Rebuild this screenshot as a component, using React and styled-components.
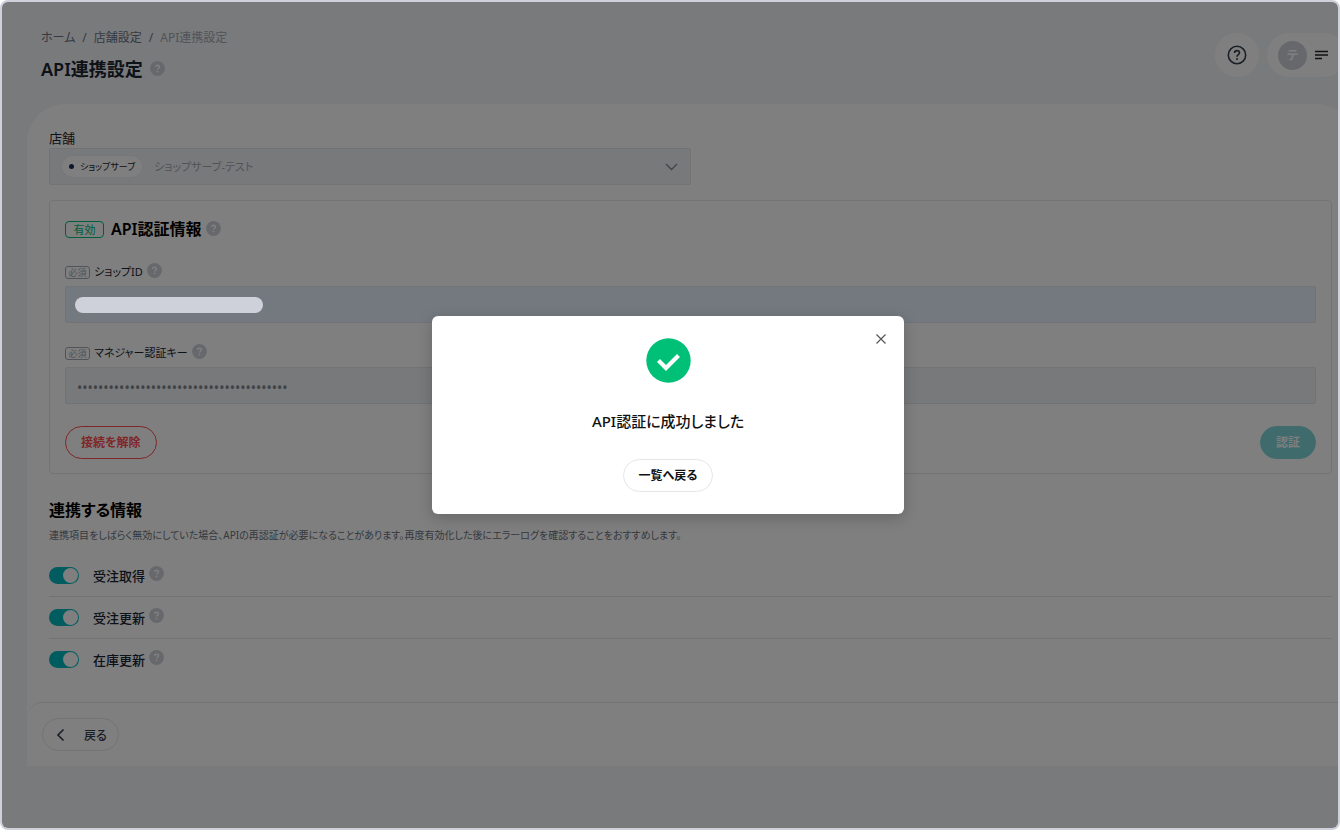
import React, { useState } from 'react';
import styled, { createGlobalStyle } from 'styled-components';

const GlobalStyle = createGlobalStyle`
    *, *::before, *::after {
        box-sizing: border-box;
    }

    body {
        margin: 0;
        background-color: #ffffff;
        color: #1a2433;
        font-family: 'Noto Sans', 'Noto Sans CJK JP', sans-serif;
        font-size: 13px;
        font-feature-settings: 'palt';
    }

    button, input, select {
        font: inherit;
        font-feature-settings: inherit;
        color: inherit;
    }

    h1, h2, p, ol, ul {
        margin: 0;
        padding: 0;
    }
`

const Frame = styled.div`
    position: relative;
    min-height: calc(100vh - 4px);
    border: 2px solid #ced1d9;
    border-radius: 8px;
    overflow: hidden;
    background-color: #f3f5f8;
`

/* the page runs a little past the right edge of the frame */
const Page = styled.div`
    width: calc(100% + 16px);
    padding-left: 25px;
`

const Header = styled.header`
    display: flex;
    justify-content: space-between;
    height: 102px;
    padding: 26px 8px 0 14px;
`

const Breadcrumb = styled.ol`
    display: flex;
    gap: 7px;
    list-style: none;
    font-size: 12px;
    line-height: 20px;
    color: #6b7280;
`

const Crumb = styled.a`
    color: ${props => props.$current ? '#a3a7b0' : '#6b7280'};
    text-decoration: none;
`

const PageTitle = styled.h1`
    display: flex;
    align-items: center;
    gap: 7px;
    margin-top: 7px;
    font-size: 18px;
    font-weight: 600;
    line-height: 28px;
`

const Actions = styled.div`
    display: flex;
    gap: 8px;
    padding-top: 5px;
`

const RoundButton = styled.button`
    display: flex;
    align-items: center;
    gap: 8px;
    height: 44px;
    min-width: 44px;
    padding: 0 ${props => props.$wide ? '18px 0 11px' : '12px'};
    border: none;
    border-radius: 22px;
    background-color: #ffffff;
`

const Avatar = styled.span`
    display: flex;
    align-items: center;
    justify-content: center;
    width: 29px;
    height: 29px;
    border-radius: 50%;
    background-color: #ced1d9;
    color: #ffffff;
    font-size: 12px;
    font-weight: 600;
`

const Card = styled.main`
    border-radius: 38px 38px 0 0;
    background-color: #ffffff;
`

const CardBody = styled.div`
    padding: 24px 22px 23px;
`

const StoreLabel = styled.label`
    display: block;
    line-height: 20px;
`

const SelectBox = styled.div`
    display: flex;
    align-items: center;
    width: 50%;
    height: 37px;
    padding: 0 12px 0 11px;
    border: 1px solid #e4e6ea;
    border-radius: 2px;
    background-color: #f1f3f6;
`

const Chip = styled.span`
    display: flex;
    align-items: center;
    gap: 6px;
    height: 23px;
    padding: 0 7px;
    border: 1px solid #eceef1;
    border-radius: 12px;
    background-color: #ffffff;
    font-size: 9px;
    white-space: nowrap;

    &::before {
        content: '';
        width: 5px;
        height: 5px;
        border-radius: 50%;
        background-color: #1f2b5c;
    }
`

const StoreSelect = styled.select`
    flex: 1;
    min-width: 0;
    height: 35px;
    padding: 0 11px;
    border: none;
    appearance: none;
    background-color: transparent;
    color: #a3a7b0;
    font-size: 11px;
    opacity: 1;
`

const Panel = styled.section`
    margin-top: 15px;
    padding: 15px 15px 14px;
    border: 1px solid #e4e6ea;
    border-radius: 4px;
`

const PanelTitle = styled.h2`
    display: flex;
    align-items: center;
    gap: 4px;
    font-size: 16px;
    font-weight: 600;
    line-height: 26px;
    color: #000000;
`

const StatusBadge = styled.span`
    width: 39px;
    height: 17px;
    margin-right: 3px;
    border: 1px solid #00bf76;
    border-radius: 4px;
    color: #00bf76;
    font-size: 11px;
    font-weight: 400;
    line-height: 15px;
    text-align: center;
`

const FieldLabel = styled.label`
    display: flex;
    align-items: center;
    gap: 4px;
    margin-top: 20px;
    font-size: 11px;
    line-height: 20px;
`

const Required = styled.span`
    width: 25px;
    height: 13px;
    border: 1px solid #a3a7b0;
    border-radius: 3px;
    color: #a3a7b0;
    font-size: 9px;
    line-height: 11px;
    text-align: center;
`

const Field = styled.div`
    position: relative;
    margin-top: 4px;
`

const TextInput = styled.input`
    display: block;
    width: 100%;
    height: 37px;
    padding: 3px 11px 0;
    border: 1px solid #e4e6ea;
    border-radius: 2px;
    background-color: ${props => props.$filled ? '#e8f0fe' : '#f1f3f6'};
    color: #80858f;
    font-size: 14px;
`

const Redaction = styled.span`
    position: absolute;
    z-index: 2;
    top: 11px;
    left: 10px;
    width: 188px;
    height: 16px;
    border-radius: 8px;
    background-color: #ced1d9;
`

const ButtonRow = styled.div`
    display: flex;
    justify-content: space-between;
    margin-top: 22px;
`

const PillButton = styled.button`
    height: 33px;
    padding: 0 15px 2px;
    border: 1px solid ${props => props.$border || '#e4e6ea'};
    border-radius: 17px;
    background-color: ${props => props.$fill || '#ffffff'};
    color: ${props => props.$color || '#111111'};
    font-size: 12px;
    font-weight: 600;
`

const SectionTitle = styled.h2`
    margin-top: 24px;
    font-size: 16px;
    font-weight: 600;
    line-height: 24px;
    color: #000000;
`

const Note = styled.p`
    margin-top: 5px;
    font-size: 10px;
    line-height: 16px;
    color: #6b7280;
`

const SyncList = styled.ul`
    margin-top: 12px;
    list-style: none;
`

const SyncItem = styled.li`
    display: flex;
    align-items: center;
    gap: 4px;
    height: 42px;
    border-bottom: 1px solid #e4e6ea;
    font-weight: 500;

    &:last-child {
        height: 40px;
        border-bottom: none;
    }
`

const SyncLabel = styled.label`
    display: flex;
    align-items: center;
    gap: 14px;
`

const Toggle = styled.input`
    display: flex;
    align-items: center;
    width: 30px;
    height: 17px;
    margin: 0;
    padding: 1px;
    border-radius: 9px;
    appearance: none;
    background-color: #b9bdc6;

    &::before {
        content: '';
        width: 15px;
        height: 15px;
        border-radius: 50%;
        background-color: #ffffff;
    }

    &:checked {
        justify-content: flex-end;
        background-color: #00b9be;
    }
`

const Footer = styled.footer`
    padding: 15px;
    border-top: 1px solid #e4e6ea;
    border-radius: 16px 0 0 0;
`

const BackButton = styled.button`
    display: flex;
    align-items: center;
    gap: 16px;
    height: 33px;
    padding: 0 11px;
    border: 1px solid #e4e6ea;
    border-radius: 17px;
    background-color: #ffffff;
    color: #37414f;
    font-size: 12px;
    font-weight: 500;
`

const HelpMark = styled.svg`
    flex: none;
    width: 15px;
    height: 15px;
    margin-bottom: ${props => props.$raised ? '4px' : '2px'};
`

const Overlay = styled.div`
    position: absolute;
    z-index: 1;
    inset: 0;
    display: flex;
    align-items: center;
    justify-content: center;
    padding-right: 4px;
    background-color: rgba(0, 0, 0, 0.5);
`

const Dialog = styled.div`
    position: relative;
    display: flex;
    flex-direction: column;
    align-items: center;
    width: 472px;
    max-width: 90%;
    padding: 22px 24px;
    border-radius: 6px;
    background-color: #ffffff;
    box-shadow: 0 4px 16px rgba(0, 0, 0, 0.2);
`

const CloseButton = styled.button`
    position: absolute;
    top: 14px;
    right: 14px;
    display: flex;
    padding: 4px;
    border: none;
    background: none;
`

const DialogTitle = styled.h2`
    margin: 25px 0;
    font-size: 15px;
    font-weight: 500;
    line-height: 26px;
    color: #111111;
`

const Help = ({ raised }) => (
    <HelpMark viewBox="0 0 15 15" $raised={raised} aria-hidden="true">
        <circle cx="7.5" cy="7.5" r="7.4" fill="#ced1d9"/>
        <path d="M5.6 6.1c0-1.2.8-1.9 1.9-1.9s1.9.7 1.9 1.7c0 1.3-1.9 1.4-1.9 2.6" fill="none" stroke="#ffffff" strokeWidth="1.4"/>
        <circle cx="7.5" cy="10.4" r="0.9" fill="#ffffff"/>
    </HelpMark>
);

const syncItems = [
    { id: 'order-get', name: '受注取得' },
    { id: 'order-update', name: '受注更新' },
    { id: 'stock-update', name: '在庫更新' },
];

const App = () => {
    const [open, setOpen] = useState(true);

    return (
        <>
            <GlobalStyle/>
            <Frame>
                <Page>
                    <Header>
                        <div>
                            <Breadcrumb>
                                <li><Crumb href="#home">ホーム</Crumb></li>
                                <li>/</li>
                                <li><Crumb href="#store">店舗設定</Crumb></li>
                                <li>/</li>
                                <li><Crumb href="#api" $current>API連携設定</Crumb></li>
                            </Breadcrumb>
                            <PageTitle>API連携設定<Help/></PageTitle>
                        </div>
                        <Actions>
                            <RoundButton aria-label="ヘルプ">
                                <svg width="20" height="20" viewBox="0 0 20 20" fill="none" stroke="#37414f">
                                    <circle cx="10" cy="10" r="8.7" strokeWidth="1.6"/>
                                    <path d="M7.5 8c0-1.5 1.1-2.4 2.5-2.4s2.5.9 2.5 2.2c0 1.7-2.5 2-2.5 3.9" strokeWidth="1.6"/>
                                    <circle cx="10" cy="14" r="1" fill="#37414f" stroke="none"/>
                                </svg>
                            </RoundButton>
                            <RoundButton $wide aria-label="アカウント">
                                <Avatar>テ</Avatar>
                                <svg width="13" height="10" viewBox="0 0 13 10" stroke="#222222" strokeWidth="1.5">
                                    <path d="M0 1.5h13M0 5h13M0 8.500h7"/>
                                </svg>
                            </RoundButton>
                        </Actions>
                    </Header>
                    <Card>
                        <CardBody>
                            <StoreLabel htmlFor="store">店舗</StoreLabel>
                            <SelectBox>
                                <Chip>ショップサーブ</Chip>
                                <StoreSelect id="store" disabled>
                                    <option>ショップサーブ-テスト</option>
                                </StoreSelect>
                                <svg width="13" height="8" viewBox="0 0 13 8" fill="none" stroke="#80858f" strokeWidth="1.3">
                                    <path d="M1 1l5.5 5.5L12 1"/>
                                </svg>
                            </SelectBox>
                            <Panel>
                                <PanelTitle><StatusBadge>有効</StatusBadge>API認証情報<Help/></PanelTitle>
                                <FieldLabel htmlFor="shop-id"><Required>必須</Required>ショップID<Help raised/></FieldLabel>
                                <Field>
                                    <TextInput id="shop-id" $filled/>
                                    <Redaction/>
                                </Field>
                                <FieldLabel htmlFor="manager-key"><Required>必須</Required>マネジャー認証キー<Help raised/></FieldLabel>
                                <Field>
                                    <TextInput id="manager-key" type="password" defaultValue={'0'.repeat(40)}/>
                                </Field>
                                <ButtonRow>
                                    <PillButton $border="#ff4d4f" $color="#ff4d4f">接続を解除</PillButton>
                                    <PillButton $border="#80d6d8" $fill="#80d6d8" $color="#ffffff">認証</PillButton>
                                </ButtonRow>
                            </Panel>
                            <SectionTitle>連携する情報</SectionTitle>
                            <Note>連携項目をしばらく無効にしていた場合、APIの再認証が必要になることがあります。再度有効化した後にエラーログを確認することをおすすめします。</Note>
                            <SyncList>
                                {syncItems.map(item => (
                                    <SyncItem key={item.id}>
                                        <SyncLabel><Toggle type="checkbox" role="switch" defaultChecked/>{item.name}</SyncLabel>
                                        <Help raised/>
                                    </SyncItem>
                                ))}
                            </SyncList>
                        </CardBody>
                        <Footer>
                            <BackButton>
                                <svg width="14" height="14" viewBox="0 0 14 14" fill="none" stroke="#37414f" strokeWidth="1.7">
                                    <path d="M9.5 1.5L4 7l5.5 5.5"/>
                                </svg>
                                戻る
                            </BackButton>
                        </Footer>
                    </Card>
                </Page>
                {open && (
                    <Overlay>
                        <Dialog role="dialog" aria-modal="true" aria-labelledby="dialog-title">
                            <CloseButton aria-label="閉じる" onClick={() => setOpen(false)}>
                                <svg width="10" height="10" viewBox="0 0 10 10" stroke="#555555" strokeWidth="1.2">
                                    <path d="M.5.5l9 9M9.5.5l-9 9"/>
                                </svg>
                            </CloseButton>
                            <svg width="45" height="45" viewBox="0 0 45 45">
                                <circle cx="22.5" cy="22.5" r="22.2" fill="#00bf76"/>
                                <path d="M12.500 22.500l7.500 7.500L32.500 17.500" fill="none" stroke="#ffffff" strokeWidth="4.2"/>
                            </svg>
                            <DialogTitle id="dialog-title">API認証に成功しました</DialogTitle>
                            <PillButton onClick={() => setOpen(false)}>一覧へ戻る</PillButton>
                        </Dialog>
                    </Overlay>
                )}
            </Frame>
        </>
    );
};

export default App;
